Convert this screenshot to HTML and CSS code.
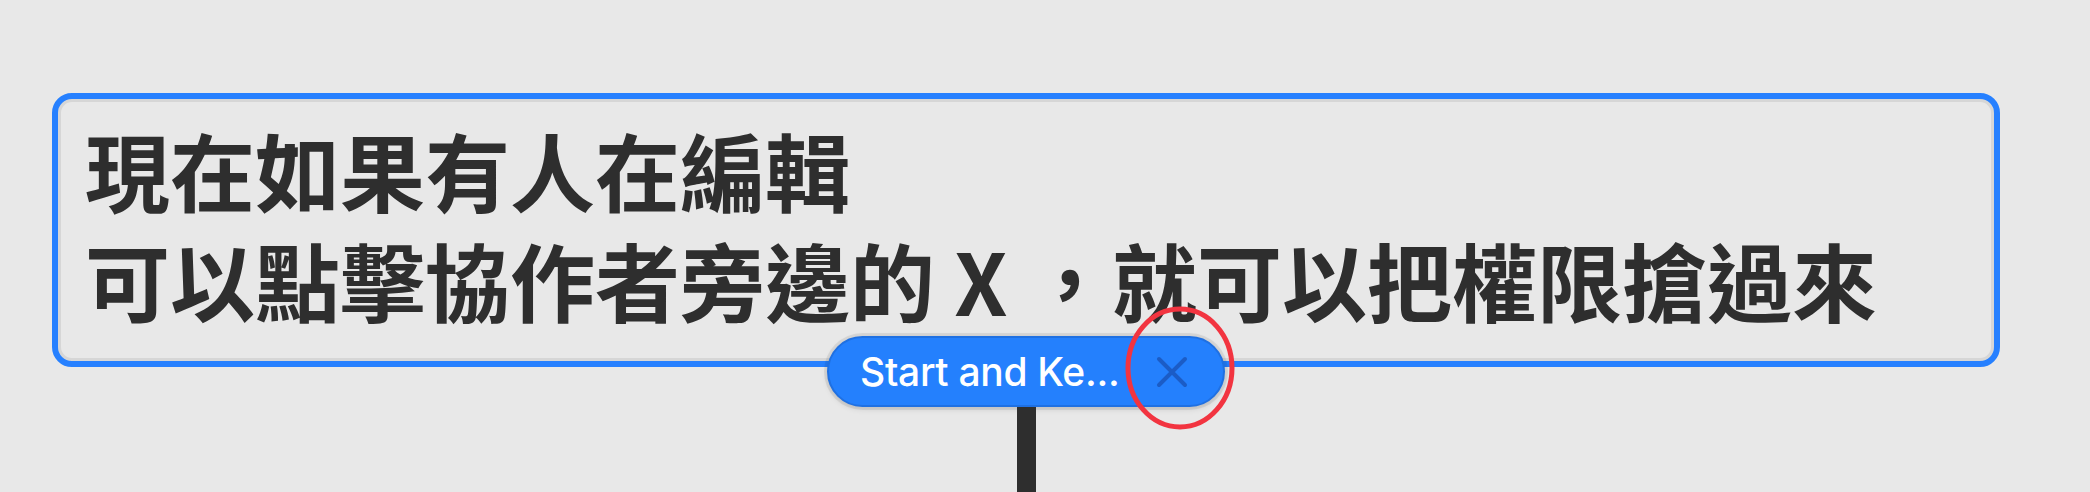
FILE: index.html
```html
<!DOCTYPE html>
<html lang="zh-Hant">
<head>
<meta charset="utf-8">
<title>Node</title>
<link rel="stylesheet" href="styles.css">
</head>
<body>
  <div class="canvas">
    <div class="node">
      <div class="node-line">現在如果有人在編輯</div>
      <div class="node-line">可以點擊協作者旁邊的 X ，就可以把權限搶過來</div>
    </div>
    <div class="badge-wrap">
      <div class="badge">
        <span class="badge-label">Start and Ke...</span>
        <span class="badge-close">
          <svg width="32" height="32" viewBox="0 0 32 32"><path d="M3 3 L29 29 M29 3 L3 29" stroke="#1b5cc6" stroke-width="4" stroke-linecap="round" fill="none"/></svg>
        </span>
      </div>
      <div class="stem"></div>
    </div>
    <svg class="annotation" width="120" height="134" viewBox="0 0 120 134"><ellipse cx="60" cy="67" rx="52" ry="59" fill="none" stroke="#f23440" stroke-width="5"/></svg>
  </div>
</body>
</html>
```
FILE: styles.css
```css
html, body {
  margin: 0;
  padding: 0;
  background: #e8e8e8;
  width: 2090px;
  height: 492px;
  overflow: hidden;
}
.canvas {
  position: relative;
  width: 2090px;
  height: 492px;
  padding: 93px 0 0 52px;
  box-sizing: border-box;
}
.node {
  width: 1948px;
  height: 274px;
  box-sizing: border-box;
  border: 6px solid #2680ff;
  border-radius: 20px;
  box-shadow: inset 0 0 0 3px #d6d6d6;
  padding: 15px 27px 0 27px;
}
.node-line {
  height: 110px;
  font-family: "Noto Sans CJK TC", "Noto Sans CJK SC", sans-serif;
  font-weight: 700;
  font-size: 85px;
  line-height: 110px;
  color: #2e2e2e;
  white-space: nowrap;
}
.badge-wrap {
  position: absolute;
  left: 827px;
  top: 336px;
  display: flex;
  flex-direction: column;
  align-items: flex-start;
}
.badge {
  width: 398px;
  height: 71px;
  box-sizing: border-box;
  border-radius: 36px;
  background: #2480fd;
  border: 2px solid #1f70e2;
  box-shadow: 0 0 0 3px rgba(0,0,0,0.07), 0 2px 6px rgba(0,0,0,0.12);
  display: flex;
  align-items: center;
  padding-left: 31px;
}
.badge-label {
  font-family: Inter, "Noto Sans", sans-serif;
  font-weight: 500;
  font-size: 39px;
  color: #ffffff;
  letter-spacing: -0.3px;
}
.badge-close {
  margin-left: auto;
  margin-right: 35px;
  width: 32px;
  height: 32px;
  display: flex;
}
.stem {
  width: 19px;
  height: 90px;
  background: #2e2e2e;
  margin-left: 190px;
}
.annotation {
  position: absolute;
  left: 1120px;
  top: 301px;
}
```
